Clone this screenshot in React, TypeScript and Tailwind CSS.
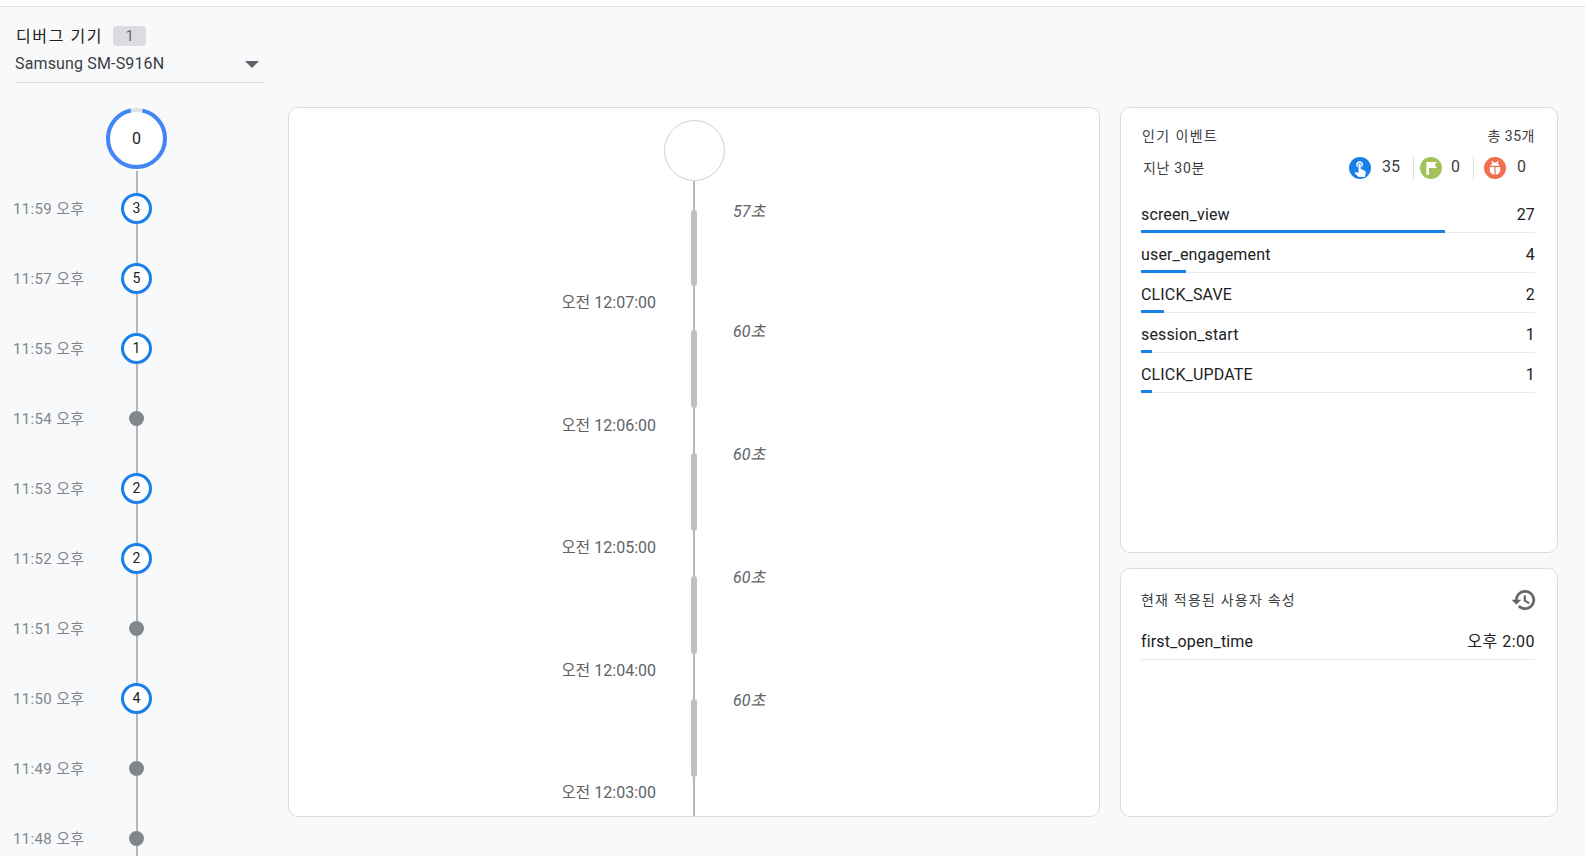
const font = "font-['Roboto','Noto_Sans_CJK_KR',sans-serif]";

const timeline = [
  { time: "11:59 오후", count: 3 },
  { time: "11:57 오후", count: 5 },
  { time: "11:55 오후", count: 1 },
  { time: "11:54 오후", count: 0 },
  { time: "11:53 오후", count: 2 },
  { time: "11:52 오후", count: 2 },
  { time: "11:51 오후", count: 0 },
  { time: "11:50 오후", count: 4 },
  { time: "11:49 오후", count: 0 },
  { time: "11:48 오후", count: 0 },
];

const segments = [
  { label: "오전 12:07:00", seconds: "57초", barHeight: "h-[76px]", height: "h-[120px]", labelTop: "pt-[83px]" },
  { label: "오전 12:06:00", seconds: "60초", barHeight: "h-[78px]", height: "h-[123px]", labelTop: "pt-[86px]" },
  { label: "오전 12:05:00", seconds: "60초", barHeight: "h-[78px]", height: "h-[123px]", labelTop: "pt-[85px]" },
  { label: "오전 12:04:00", seconds: "60초", barHeight: "h-[78px]", height: "h-[123px]", labelTop: "pt-[85px]" },
  { label: "오전 12:03:00", seconds: "60초", barHeight: "h-[78px]", height: "h-[123px]", labelTop: "pt-[84px]" },
  { label: "", seconds: "60초", barHeight: "h-[78px]", height: "h-[123px]", labelTop: "pt-[84px]" },
];

const events = [
  { name: "screen_view", count: 27 },
  { name: "user_engagement", count: 4 },
  { name: "CLICK_SAVE", count: 2 },
  { name: "session_start", count: 1 },
  { name: "CLICK_UPDATE", count: 1 },
];

const TOTAL = 35;

function Ring() {
  return (
    <svg width="61" height="61" viewBox="0 0 61 61" className="block">
      <circle cx="30.5" cy="30.5" r="28.5" fill="#fff" stroke="#e0e0e0" strokeWidth="4" />
      <circle
        cx="30.5"
        cy="30.5"
        r="28.5"
        fill="none"
        stroke="#4285f4"
        strokeWidth="4"
        strokeDasharray="167 12"
        strokeDashoffset="-6"
        transform="rotate(-90 30.5 30.5)"
      />
    </svg>
  );
}

function TouchIcon() {
  return (
    <span className="flex w-[22px] h-[22px] rounded-full bg-[#1a7fe8] items-center justify-center overflow-hidden">
      <svg width="18" height="18" viewBox="0 0 24 24" fill="#fff">
        <path d="M9 11.24V7.5C9 6.12 10.12 5 11.5 5S14 6.12 14 7.5v3.74c1.21-.81 2-2.18 2-3.74C16 5.01 13.99 3 11.5 3S7 5.01 7 7.5c0 1.56.79 2.93 2 3.74zm9.84 4.63l-4.54-2.26c-.17-.07-.35-.11-.54-.11H13v-6c0-.83-.67-1.5-1.5-1.5S10 6.67 10 7.5v10.74l-3.43-.72c-.08-.01-.15-.03-.24-.03-.31 0-.59.13-.79.33l-.79.8 4.94 4.94c.27.27.65.44 1.06.44h6.79c.75 0 1.33-.55 1.44-1.28l.75-5.27c.01-.07.02-.14.02-.2 0-.62-.38-1.16-.91-1.38z" />
      </svg>
    </span>
  );
}

function FlagIcon() {
  return (
    <span className="flex w-[22px] h-[22px] rounded-full bg-[#a4c25a] items-center justify-center">
      <svg width="16" height="16" viewBox="0 0 24 24" fill="#fff">
        <path d="M5 3h16l-3.5 4.5L21 12H9v10H5z" />
      </svg>
    </span>
  );
}

function BugIcon() {
  return (
    <span className="flex w-[22px] h-[22px] rounded-full bg-[#f0704f] items-center justify-center">
      <svg width="18" height="18" viewBox="0 0 24 24" fill="#fff">
        <path d="M7.2 3.2l1.3-.8 1.5 2.4c.6-.2 1.3-.3 2-.3s1.4.1 2 .3l1.5-2.4 1.3.8-1.4 2.3c1.3.9 2.2 2.1 2.4 3.5H6.2c.2-1.4 1.1-2.6 2.4-3.5L7.2 3.2z" />
        <path d="M5 10.5h6.2V21C7.6 20.6 5 18 5 15v-4.5zM12.8 10.5H19V15c0 3-2.6 5.6-6.2 6V10.5z" />
      </svg>
    </span>
  );
}

function HistoryIcon() {
  return (
    <svg width="26" height="26" viewBox="0 0 24 24" fill="#5f6368" stroke="#5f6368" strokeWidth="0.5">
      <path d="M13 3c-4.97 0-9 4.03-9 9H1l3.89 3.89.07.14L9 12H6c0-3.87 3.13-7 7-7s7 3.13 7 7-3.13 7-7 7c-1.93 0-3.68-.79-4.94-2.06l-1.42 1.42C8.27 19.99 10.51 21 13 21c4.97 0 9-4.03 9-9s-4.03-9-9-9zm-1 5v5l4.28 2.54.72-1.21-3.5-2.08V8H12z" />
    </svg>
  );
}

function Sidebar() {
  return (
    <aside className="w-[288px] shrink-0 pt-[19px]">
      <div className="pl-[15px] w-[265px]">
        <div className="flex items-center h-[20px] pl-[1px] gap-[10px]">
          <span className="text-[16px] tracking-[1.6px] text-[#202124] pt-[2px]">디버그 기기</span>
          <span className="flex w-[33px] h-[20px] items-center justify-center rounded-[3px] bg-[#dadce0] text-[14px] text-[#5f6368]">
            1
          </span>
        </div>
        <div className="flex items-center justify-between h-[37px] border-b border-[#dadce0] pr-[6px] text-[16px] tracking-[0.15px] text-[#3c4043]">
          <span>Samsung SM-S916N</span>
          <span className="w-0 h-0 border-x-[7px] border-x-transparent border-t-[7px] border-t-[#5f6368]" />
        </div>
      </div>
      <div className="flex flex-col mt-[25px] pl-[14px]">
        <div className="flex">
          <span className="w-[92px]" />
          <div className="relative flex w-[61px] h-[61px] items-center justify-center">
            <Ring />
            <span className="absolute text-[16px] text-[#202124]">0</span>
          </div>
        </div>
        <div className="flex mt-[2px] h-[2px]">
          <span className="w-[92px]" />
          <div className="flex w-[61px] justify-center">
            <span className="w-[2px] bg-[#b4b6ba]" />
          </div>
        </div>
        {timeline.map((item) => (
          <div key={item.time} className="flex">
            <span className="w-[92px] h-[70px] -ml-[1px] mr-[1px] flex items-center text-[15px] tracking-[0.35px] text-[#80868b] pt-[3px]">
              {item.time}
            </span>
            <div className="flex flex-col items-center w-[61px] h-[70px]">
              <span className="w-[2px] flex-1 bg-[#b4b6ba]" />
              {item.count > 0 ? (
                <span className="flex w-[31px] h-[31px] items-center justify-center rounded-full border-[3px] border-[#1a7fe8] bg-white text-[14px] text-[#202124]">
                  {item.count}
                </span>
              ) : (
                <span className="w-[15px] h-[15px] rounded-full bg-[#80868b]" />
              )}
              <span className="w-[2px] flex-1 bg-[#b4b6ba]" />
            </div>
          </div>
        ))}
      </div>
    </aside>
  );
}

function StreamCard() {
  return (
    <section className="w-[812px] h-[710px] shrink-0 overflow-hidden rounded-[10px] border border-[#dadce0] bg-white">
      <div className="flex flex-col pt-[12px]">
        <div className="flex justify-center">
          <span className="w-[61px] h-[61px] rounded-full border border-[#cfcfcf]" />
        </div>
        <div className="flex justify-center">
          <span className="w-[2px] h-[29px] bg-[#b4b6ba]" />
        </div>
        {segments.map((seg, i) => (
          <div key={i} className={`flex shrink-0 ${seg.height}`}>
            <div className={`flex justify-end w-[275px] ml-[92px] overflow-hidden ${seg.labelTop}`}>
              <span className="w-[93px] h-[20px] flex justify-end overflow-hidden whitespace-nowrap text-[16px] leading-[20px] text-[#5f6368]">
                {seg.label}
              </span>
            </div>
            <div className="flex flex-col items-center w-[76px]">
              <span className={`w-[6px] rounded-[3px] bg-[#bdc1c6] ${seg.barHeight}`} />
              <span className="w-[2px] flex-1 bg-[#b4b6ba]" />
            </div>
            <span className="italic text-[16px] leading-[20px] text-[#5f6368] ml-[1px] mt-[-8px] h-[20px]">
              {seg.seconds}
            </span>
          </div>
        ))}
      </div>
    </section>
  );
}

function EventsCard() {
  return (
    <section className="h-[446px] rounded-[10px] border border-[#dadce0] bg-white pl-[20px] pr-[22px] pt-[18px]">
      <div className="flex justify-between items-center h-[20px] text-[14px] text-[#3c4043]">
        <span className="pl-[1px] tracking-[1.4px]">인기 이벤트</span>
        <span className="tracking-[0.5px]">총 35개</span>
      </div>
      <div className="flex items-center justify-between h-[24px] mt-[10px] text-[14px] text-[#3c4043]">
        <span className="pl-[2px] tracking-[0.7px]">지난 30분</span>
        <div className="flex items-center h-[22px] text-[16px] text-[#3c4043]">
          <TouchIcon />
          <span className="w-[18px] ml-[11px] -mt-[3px]">35</span>
          <span className="w-px h-[22px] bg-[#dadce0] ml-[13px] mr-[6px]" />
          <FlagIcon />
          <span className="w-[9px] ml-[9px] -mt-[3px]">0</span>
          <span className="w-px h-[22px] bg-[#dadce0] ml-[13px] mr-[10px]" />
          <BugIcon />
          <span className="w-[9px] ml-[11px] mr-[9px] -mt-[3px]">0</span>
        </div>
      </div>
      <ul className="mt-[23px] flex flex-col">
        {events.map((e) => (
          <li key={e.name} className="h-[40px]">
            <div className="flex justify-between items-center h-[24px] text-[16px] tracking-[0.15px] text-[#202124]">
              <span>{e.name}</span>
              <span>{e.count}</span>
            </div>
            <div className="mt-[3px] h-[3px] border-b border-[#e8eaed]">
              <div className="h-[3px] bg-[#1a7fe8]" style={{ width: `${(e.count / TOTAL) * 100}%` }} />
            </div>
          </li>
        ))}
      </ul>
    </section>
  );
}

function UserPropertiesCard() {
  return (
    <section className="h-[249px] rounded-[10px] border border-[#dadce0] bg-white pl-[20px] pr-[22px] pt-[18px]">
      <div className="flex justify-between items-center h-[26px] text-[14px] text-[#3c4043]">
        <span className="tracking-[1.2px]">현재 적용된 사용자 속성</span>
        <span className="-mr-[2px]">
          <HistoryIcon />
        </span>
      </div>
      <div className="flex justify-between items-center h-[32px] mt-[15px] border-b border-[#e8eaed] pb-[3px] text-[16px] tracking-[0.15px] text-[#202124]">
        <span>first_open_time</span>
        <span className="tracking-[0.5px]">오후 2:00</span>
      </div>
    </section>
  );
}

export default function App() {
  return (
    <div className={`h-[856px] w-[1585px] overflow-hidden bg-[#f8f9fa] ${font}`}>
      <div className="h-[7px] bg-white border-b border-[#dadce0]" />
      <main className="flex h-[849px]">
        <Sidebar />
        <div className="flex gap-[20px] pt-[100px]">
          <StreamCard />
          <div className="flex flex-col w-[438px] gap-[15px]">
            <EventsCard />
            <UserPropertiesCard />
          </div>
        </div>
      </main>
    </div>
  );
}
